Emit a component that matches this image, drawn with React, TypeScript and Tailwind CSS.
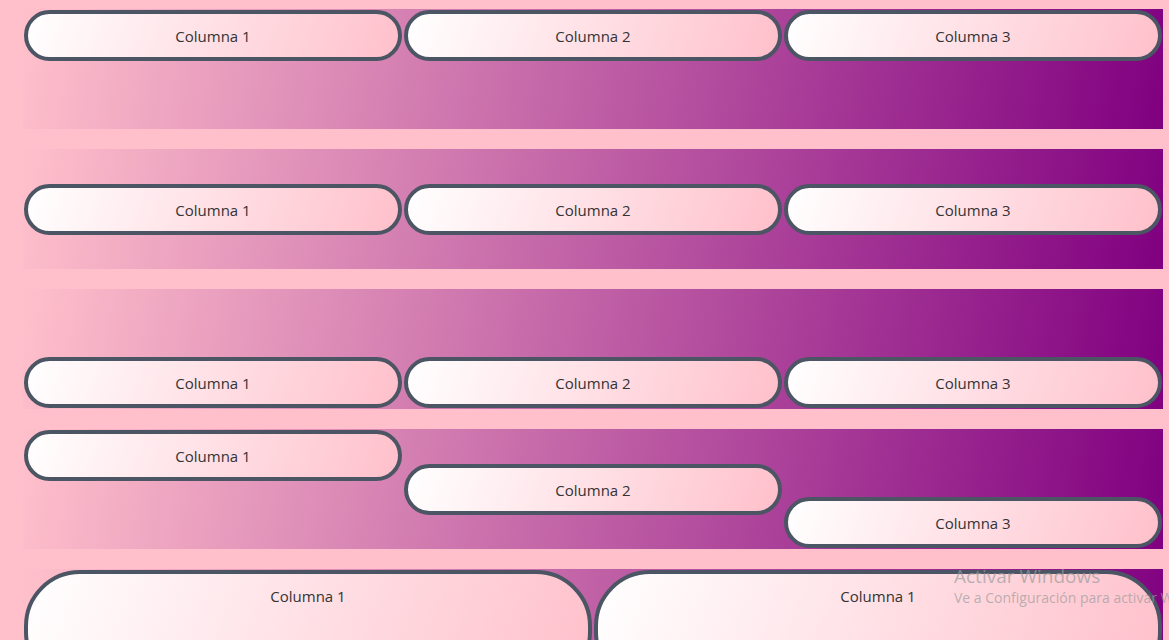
import React from "react";

type Align = "start" | "center" | "end";

const Pill = ({ label, self, big }: { label: string; self?: Align; big?: boolean }) => {
    const selfClass =
        self === "start" ? "self-start" : self === "center" ? "self-center" : self === "end" ? "self-end" : "";
    return (
        <div
            className={`m-px border-4 border-[#4b5563] bg-[linear-gradient(110deg,#ffffff,#ffc0cb)] pt-[13px] pb-[11px] text-center text-[15px] leading-[19px] text-[#333] ${
                big ? "rounded-[56px]" : "h-[51px] rounded-[50px]"
            } ${selfClass}`}
        >
            {label}
        </div>
    );
};

const Row = ({ align, children, cols = 3 }: { align: string; children: React.ReactNode; cols?: number }) => (
    <div
        className={`ml-[23px] grid h-[120px] w-[1140px] shrink-0 bg-[linear-gradient(100deg,#ffc0cb,#800080)] ${align} ${
            cols === 2 ? "grid-cols-2" : "grid-cols-3"
        }`}
    >
        {children}
    </div>
);

const App = () => {
    return (
        <div
            className="relative flex h-screen w-full flex-col gap-5 overflow-hidden bg-[#ffc0cb] pt-[9px]"
            style={{ fontFamily: '"Open Sans", "Noto Sans", sans-serif' }}
        >
            <Row align="items-start">
                <Pill label="Columna 1" />
                <Pill label="Columna 2" />
                <Pill label="Columna 3" />
            </Row>
            <Row align="items-center">
                <Pill label="Columna 1" />
                <Pill label="Columna 2" />
                <Pill label="Columna 3" />
            </Row>
            <Row align="items-end">
                <Pill label="Columna 1" />
                <Pill label="Columna 2" />
                <Pill label="Columna 3" />
            </Row>
            <Row align="items-start">
                <Pill label="Columna 1" self="start" />
                <Pill label="Columna 2" self="center" />
                <Pill label="Columna 3" self="end" />
            </Row>
            <Row align="items-stretch" cols={2}>
                <Pill label="Columna 1" big />
                <Pill label="Columna 1" big />
            </Row>

            {/* windows activation watermark */}
            <div className="pointer-events-none absolute left-[954px] top-[564px] whitespace-nowrap text-[#9b9b9b]/70">
                <div className="text-[19px] leading-[24px]">Activar Windows</div>
                <div className="text-[14px] leading-[20px]">Ve a Configuración para activar Windows.</div>
            </div>
        </div>
    );
};

export default App;
